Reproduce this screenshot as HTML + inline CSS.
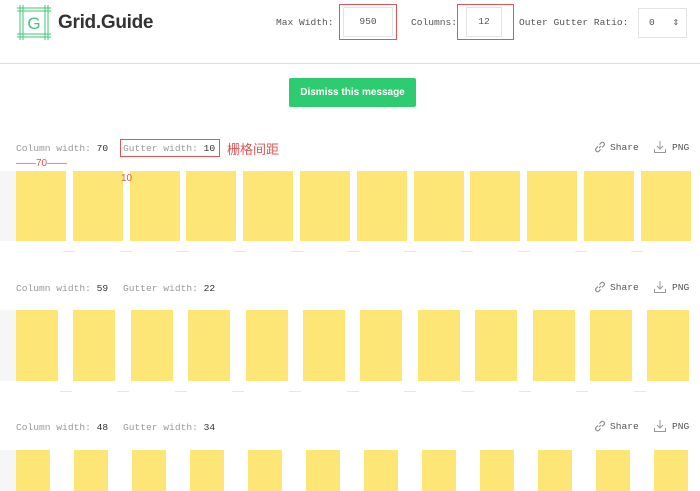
<!DOCTYPE html><html><head><meta charset="utf-8"><style>
*{margin:0;padding:0;box-sizing:border-box}
html,body{width:700px;height:491px;overflow:hidden}
body{background:#fff;position:relative;font-family:"Liberation Mono",monospace;}
.a{position:absolute}
.lbl{font-size:9.6px;color:#555;}
.box{position:absolute;border:1px solid #e3e3e3;background:#fff;font-size:9.6px;color:#555;text-align:center}
.red{position:absolute;border:1px solid #e05555}
.info{position:absolute;font-size:9.6px;color:#999;white-space:nowrap}
.info b{color:#333;font-weight:normal}
.col{position:absolute;background:#fde675}
.act{position:absolute;font-size:9.6px;color:#555}
.dash{position:absolute;height:1px;background:#e6e6e6}
</style></head><body>
<svg class="a" style="left:17px;top:5px" width="34" height="35" viewBox="0 0 34 35">
<g stroke="#3ec77a" stroke-width="1" fill="none">
<line x1="3" y1="0" x2="3" y2="35"/><line x1="6" y1="0" x2="6" y2="35"/>
<line x1="28" y1="0" x2="28" y2="35"/><line x1="31" y1="0" x2="31" y2="35"/>
<line x1="0" y1="3" x2="34" y2="3"/><line x1="0" y1="6" x2="34" y2="6"/>
<line x1="0" y1="29" x2="34" y2="29"/><line x1="0" y1="32" x2="34" y2="32"/>
</g>
<text x="17" y="24" text-anchor="middle" font-family="Liberation Sans" font-size="17" fill="#3ec77a">G</text>
</svg>
<div class="a" style="left:58px;top:12px;font-family:'Liberation Sans',sans-serif;font-size:19px;font-weight:bold;color:#333;letter-spacing:-0.3px">Grid.Guide</div>
<div class="a lbl" style="left:276px;top:17px">Max Width:</div>
<div class="box" style="left:343px;top:7px;width:50px;height:30px;line-height:28px">950</div>
<div class="red" style="left:339px;top:4px;width:58px;height:36px"></div>
<div class="a lbl" style="left:411px;top:17px">Columns:</div>
<div class="box" style="left:466px;top:7px;width:36px;height:30px;line-height:28px">12</div>
<div class="red" style="left:457px;top:4px;width:57px;height:36px"></div>
<div class="a lbl" style="left:519px;top:17px">Outer Gutter Ratio:</div>
<div class="box" style="left:638px;top:8px;width:49px;height:30px;line-height:28px;text-align:left;padding-left:10px">0 <span style="margin-left:12px;font-size:8px">&#8661;</span></div>
<div class="a" style="left:0;top:63px;width:700px;height:1px;background:#e0e0e0"></div>
<div class="a" style="left:289px;top:78px;width:127px;height:29px;background:#2ecc71;border-radius:2px;color:#fff;font-family:'Liberation Sans',sans-serif;font-weight:bold;font-size:10px;text-align:center;line-height:29px">Dismiss this message</div>

<div class="info" style="left:16px;top:143px">Column width: <b>70</b></div>
<div class="info" style="left:123px;top:143px">Gutter width: <b>10</b></div>
<div class="red" style="left:120px;top:139px;width:100px;height:18px"></div>
<div class="a" style="left:227px;top:139px;font-family:'Liberation Sans','Noto Sans CJK SC',sans-serif;font-size:13px;color:#e05555">栅格间距</div>
<div class="a" style="left:16px;top:158px;font-family:'Liberation Sans',sans-serif;font-size:10px;color:#e05555">——70——</div>
<div class="a" style="left:121px;top:173px;font-family:'Liberation Sans',sans-serif;font-size:10px;color:#e05555;z-index:2">10</div>

<div class="info" style="left:16px;top:283px">Column width: <b>59</b></div>
<div class="info" style="left:123px;top:283px">Gutter width: <b>22</b></div>
<div class="info" style="left:16px;top:422px">Column width: <b>48</b></div>
<div class="info" style="left:123px;top:422px">Gutter width: <b>34</b></div>

<div class="a" style="left:0;top:171px;width:700px;height:70px;background:#f6f6f6"></div>
<div class="a" style="left:0;top:310px;width:700px;height:71px;background:#f6f6f6"></div>
<div class="a" style="left:0;top:450px;width:700px;height:41px;background:#f6f6f6"></div>
<script>
var rows=[[171,70,50,16,56.8],[310,71,42,16,57.4],[450,41,34,16,58]];
var h='';
rows.forEach(function(r){
 h+='<div class="a" style="left:16px;top:'+r[0]+'px;width:684px;height:'+r[1]+'px;background:#fff"></div>';
 for(var i=0;i<12;i++){var x=r[3]+i*r[4];
  h+='<div class="col" style="left:'+x.toFixed(1)+'px;top:'+r[0]+'px;width:'+r[2]+'px;height:'+r[1]+'px"></div>';
  if(i>0) h+='<div class="dash" style="left:'+(x-r[4]+r[2]+(r[4]-r[2])/2-6).toFixed(1)+'px;top:'+(r[0]+r[1]+10)+'px;width:12px"></div>';
 }
});
[148,288,427].forEach(function(y){
 h+='<svg class="a" style="left:593px;top:'+(y-8)+'px" width="14" height="14" viewBox="0 0 14 14"><g fill="none" stroke="#888" stroke-width="1.1"><path d="M6 8 L8 6"/><path d="M5 6.5 L3 8.5 a2 2 0 0 0 2.8 2.8 L7.5 9.3"/><path d="M9 7.5 L11 5.5 a2 2 0 0 0 -2.8 -2.8 L6.5 4.7"/></g></svg>';
 h+='<div class="act" style="left:610px;top:'+(y-6)+'px">Share</div>';
 h+='<svg class="a" style="left:653px;top:'+(y-8)+'px" width="14" height="14" viewBox="0 0 14 14"><g fill="none" stroke="#999" stroke-width="1"><path d="M7 1 V9 M4 6 L7 9 L10 6"/><path d="M1.5 9 V12.5 H12.5 V9"/></g></svg>';
 h+='<div class="act" style="left:672px;top:'+(y-6)+'px">PNG</div>';
});
document.body.insertAdjacentHTML('beforeend',h);
</script>
</body></html>
